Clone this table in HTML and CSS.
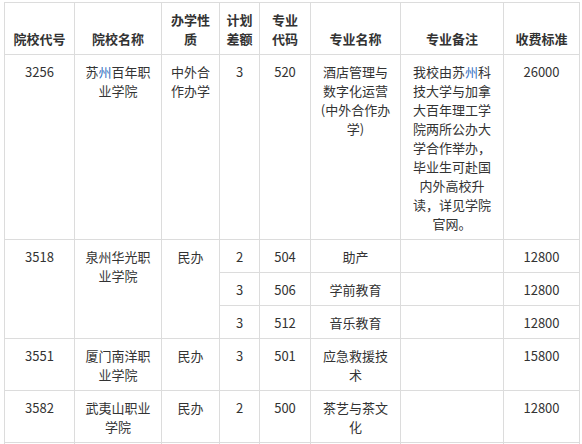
FILE: index.html
```html
<!DOCTYPE html>
<html lang="zh-CN">
<head>
<meta charset="utf-8">
<link rel="stylesheet" href="styles.css">
</head>
<body>
<div class="wrap">
<table class="plan">
  <colgroup>
    <col class="c1"><col class="c2"><col class="c3"><col class="c4"><col class="c5"><col class="c6"><col class="c7"><col class="c8">
  </colgroup>
  <thead>
    <tr>
      <th>院校代号</th>
      <th>院校名称</th>
      <th>办学性<br>质</th>
      <th>计划<br>差额</th>
      <th>专业<br>代码</th>
      <th>专业名称</th>
      <th>专业备注</th>
      <th>收费标准</th>
    </tr>
  </thead>
  <tbody>
    <tr>
      <td>3256</td>
      <td>苏<span class="kw">州</span>百年职<br>业学院</td>
      <td>中外合<br>作办学</td>
      <td>3</td>
      <td>520</td>
      <td>酒店管理与<br>数字化运营<br>(中外合作办<br>学)</td>
      <td>我校由苏<span class="kw">州</span>科<br>技大学与加拿<br>大百年理工学<br>院两所公办大<br>学合作举办，<br>毕业生可赴国<br>内外高校升<br>读，详见学院<br>官网。</td>
      <td>26000</td>
    </tr>
    <tr>
      <td rowspan="3">3518</td>
      <td rowspan="3">泉州华光职<br>业学院</td>
      <td rowspan="3">民办</td>
      <td>2</td>
      <td>504</td>
      <td>助产</td>
      <td></td>
      <td>12800</td>
    </tr>
    <tr>
      <td>3</td>
      <td>506</td>
      <td>学前教育</td>
      <td></td>
      <td>12800</td>
    </tr>
    <tr>
      <td>3</td>
      <td>512</td>
      <td>音乐教育</td>
      <td></td>
      <td>12800</td>
    </tr>
    <tr>
      <td>3551</td>
      <td>厦门南洋职<br>业学院</td>
      <td>民办</td>
      <td>3</td>
      <td>501</td>
      <td>应急救援技<br>术</td>
      <td></td>
      <td>15800</td>
    </tr>
    <tr>
      <td>3582</td>
      <td>武夷山职业<br>学院</td>
      <td>民办</td>
      <td>2</td>
      <td>500</td>
      <td>茶艺与茶文<br>化</td>
      <td></td>
      <td>12800</td>
    </tr>
    <tr>
      <td>&nbsp;</td><td></td><td></td><td></td><td></td><td></td><td></td><td></td>
    </tr>
  </tbody>
</table>
</div>
</body>
</html>
```
FILE: styles.css
```css
html, body {
  margin: 0;
  padding: 0;
  background: #fff;
}
.wrap {
  padding: 2px 0 0 4px;
}
.plan {
  border-collapse: collapse;
  table-layout: fixed;
  width: 575px;
  font-family: "Microsoft YaHei", "Noto Sans CJK SC", "Noto Sans", sans-serif;
  font-size: 13px;
  line-height: 19px;
  color: #333;
}
.c1 { width: 70px; }
.c2 { width: 87px; }
.c3 { width: 58px; }
.c4 { width: 40px; }
.c5 { width: 51px; }
.c6 { width: 90px; }
.c7 { width: 103px; }
.c8 { width: 76px; }
.plan th,
.plan td {
  border: 1px solid #dcdcdc;
  padding: 7px 2px 6px;
  text-align: center;
  white-space: nowrap;
}
.plan th {
  font-weight: bold;
  vertical-align: bottom;
}
.plan td {
  vertical-align: top;
}
.kw {
  color: #2f6fbf;
}
```
